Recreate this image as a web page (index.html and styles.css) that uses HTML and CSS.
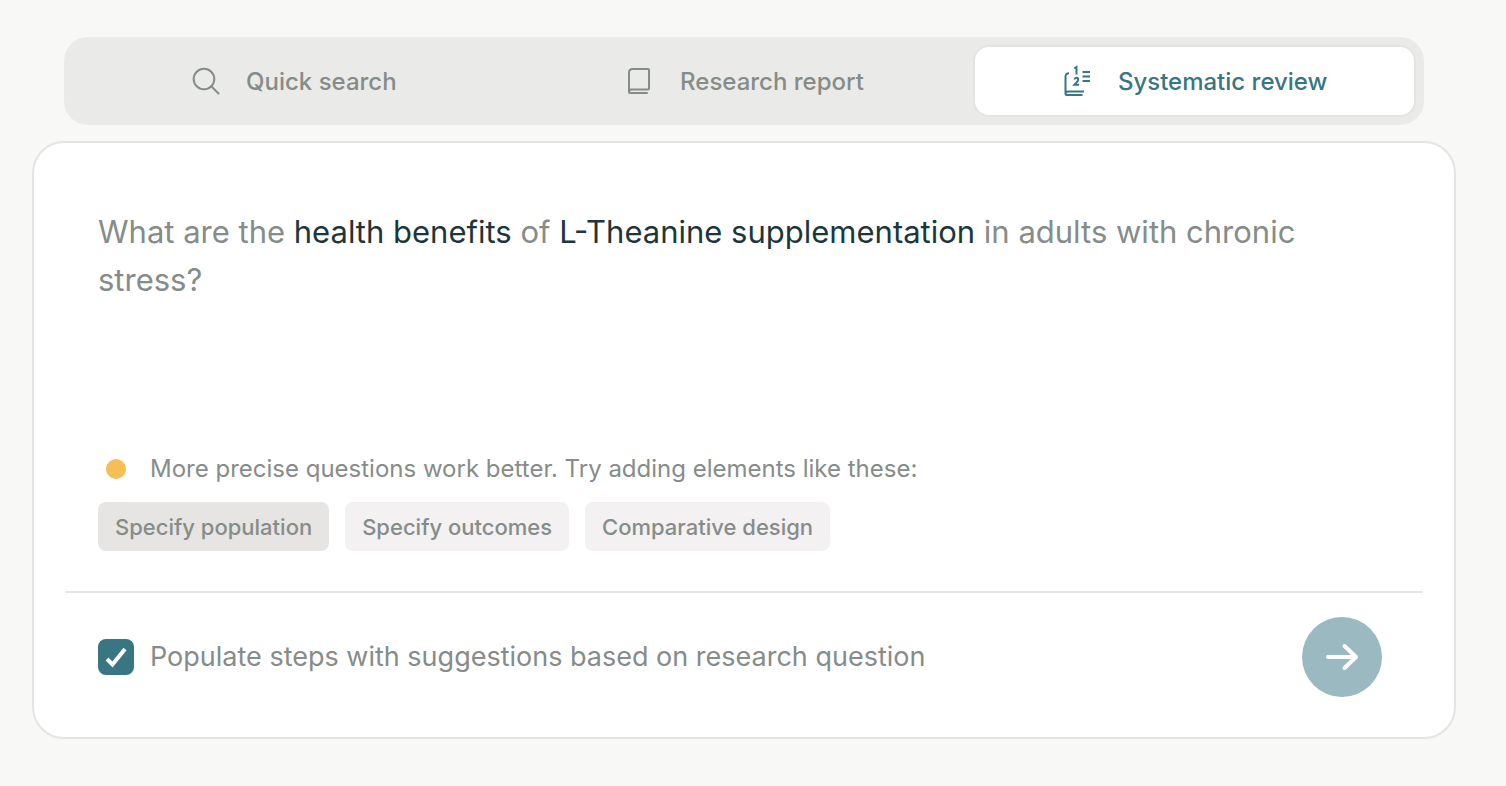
FILE: index.html
```html
<!DOCTYPE html>
<html lang="en">
<head>
    <meta charset="utf-8">
    <meta name="viewport" content="width=device-width, initial-scale=1.0">
    <title>Systematic review</title>
    <link rel="stylesheet" href="styles.css">
</head>

<body>
    <main class="page">
        <nav class="tabs">
            <button type="button" class="tab">
                <svg class="tab-icon" viewBox="0 0 32 32" aria-hidden="true">
                    <circle cx="14" cy="14" r="10.3"/>
                    <path d="M21.5 21.5L28.5 28.5"/>
                </svg>
                <span>Quick search</span>
            </button>
            <button type="button" class="tab">
                <svg class="tab-icon" viewBox="0 0 32 32" aria-hidden="true">
                    <path d="M5 27V7.5Q5 4 8.5 4H24Q25 4 25 5V23.5Q25 24.5 24 24.5H7.5Q5 24.5 5 27Q5 28 6 28H23"/>
                </svg>
                <span>Research report</span>
            </button>
            <button type="button" class="tab tab-active">
                <svg class="tab-icon tab-icon-fine" viewBox="0 0 32 32" aria-hidden="true">
                    <path d="M7 8.3Q3.5 8.3 3.5 12V29Q3.5 30 4.5 30H20.5M3.5 29Q3.5 26.5 6 26.5H22"/>
                    <path d="M12.2 3.5L14.5 2V9.5M12.5 14.5Q12.7 12.8 14.4 12.8Q16.2 12.8 16.2 14.6Q16.2 15.7 15 16.9L12.4 19.7H17"/>
                    <path d="M20.5 7H28M20.5 11.5H28M20.5 16H28"/>
                </svg>
                <span>Systematic review</span>
            </button>
        </nav>

        <form class="card">
            <div class="card-body">
                <p class="question">What are the <strong>health benefits</strong> of <strong>L-Theanine supplementation</strong> in adults with chronic stress?</p>

                <p class="hint"><span class="hint-dot"></span>More precise questions work better. Try adding elements like these:</p>
                <div class="chips">
                    <button type="button" class="chip chip-active">Specify population</button>
                    <button type="button" class="chip">Specify outcomes</button>
                    <button type="button" class="chip">Comparative design</button>
                </div>
            </div>

            <div class="card-footer">
                <label class="populate" for="populate">
                    <span class="checkbox">
                        <input type="checkbox" id="populate" checked>
                        <svg class="checkbox-mark" viewBox="0 0 36 36" aria-hidden="true">
                            <path d="M9 20L14.5 25.5L27 10"/>
                        </svg>
                    </span>
                    Populate steps with suggestions based on research question
                </label>
                <button type="submit" class="submit" aria-label="Continue">
                    <svg viewBox="0 0 40 40" aria-hidden="true">
                        <path d="M6 20H34M22.5 9L34 20L22.5 31"/>
                    </svg>
                </button>
            </div>
        </form>
    </main>
</body>

</html>
```
FILE: styles.css
```css
* {
    box-sizing: border-box;
}

body {
    margin: 0;
    background-color: #f8f8f6;
    color: #868c89;
    font-family: Inter, "Liberation Sans", sans-serif;
}

button {
    border: 0;
    color: inherit;
    font-family: inherit;
    cursor: pointer;
}

p {
    margin: 0;
}

.page {
    padding: 37px 50px 47px 32px;
}

/* Tabs */
.tabs {
    display: flex;
    gap: 8px;
    margin: 0 32px 16px;
    padding: 8px;
    border-radius: 24px;
    background-color: #eaeae8;
}

.tab {
    flex: 1 1 0;
    display: flex;
    justify-content: center;
    align-items: center;
    gap: 24px;
    height: 72px;
    padding: 0;
    border: 2px solid transparent;
    border-radius: 16px;
    background-color: transparent;
    font-size: 24px;
    font-weight: 500;
    white-space: nowrap;
}

.tab-active {
    border-color: #e4e4e2;
    background-color: #fff;
    color: #387682;
}

.tab-icon {
    width: 32px;
    height: 32px;
    fill: none;
    stroke: currentColor;
    stroke-width: 2;
    stroke-linecap: round;
}

.tab-icon-fine {
    stroke-linecap: butt;
}

/* Question card */
.card {
    padding: 0 32px;
    border: 2px solid #e4e4e2;
    border-radius: 32px;
    background-color: #fff;
}

.card-body {
    padding: 65px 32px 40px;
    border-bottom: 2px solid #e4e4e4;
}

.question {
    min-height: 243px;
    font-size: 31px;
    line-height: 48px;
}

.question strong {
    color: #1c363c;
    font-weight: 400;
}

.hint {
    display: flex;
    align-items: center;
    gap: 24px;
    margin-bottom: 15px;
    padding-left: 8px;
    font-size: 24px;
    line-height: 36px;
}

.hint-dot {
    width: 20px;
    height: 20px;
    border-radius: 50%;
    background-color: #f6be55;
}

.chips {
    display: flex;
    flex-wrap: wrap;
    gap: 16px;
}

.chip {
    height: 49px;
    padding: 0 17px;
    border-radius: 8px;
    background-color: #f3f1f2;
    font-size: 22px;
    font-weight: 500;
}

.chip-active {
    background-color: #e6e5e3;
}

.card-footer {
    display: flex;
    justify-content: space-between;
    align-items: center;
    padding: 24px 40px 40px 32px;
}

.populate {
    display: flex;
    align-items: center;
    gap: 16px;
    font-size: 27px;
    line-height: 36px;
}

.checkbox {
    display: grid;
}

.checkbox input,
.checkbox-mark {
    grid-area: 1 / 1;
    width: 36px;
    height: 36px;
    margin: 0;
}

.checkbox input {
    appearance: none;
    border: 2px solid #387682;
    border-radius: 8px;
}

.checkbox input:checked {
    background-color: #387682;
}

.checkbox-mark {
    fill: none;
    stroke: #fff;
    stroke-width: 4;
    pointer-events: none;
}

.submit {
    display: grid;
    place-items: center;
    flex: none;
    width: 80px;
    height: 80px;
    padding: 0;
    border-radius: 50%;
    background-color: #9bb9c1;
}

.submit svg {
    width: 40px;
    height: 40px;
    fill: none;
    stroke: #fff;
    stroke-width: 4;
    stroke-linecap: round;
    stroke-linejoin: round;
}
```
